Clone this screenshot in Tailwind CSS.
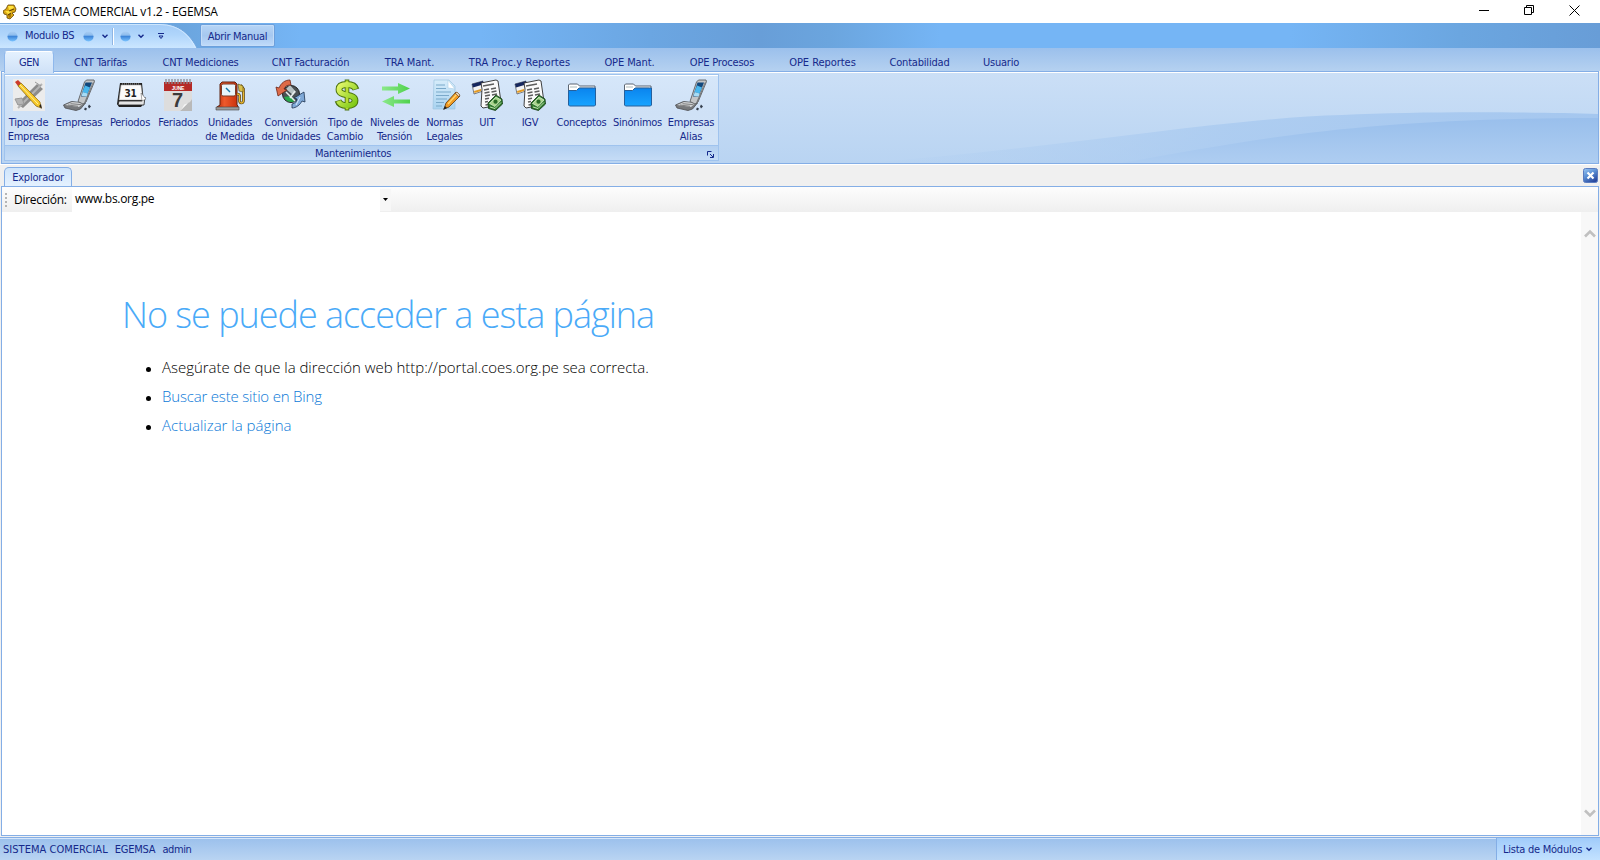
<!DOCTYPE html>
<html lang="es">
<head>
<meta charset="utf-8">
<title>SISTEMA COMERCIAL v1.2 - EGEMSA</title>
<script src="https://cdn.jsdelivr.net/npm/@tailwindcss/browser@4"></script>
</head>
<body class="w-[1600px] h-[860px] overflow-hidden bg-[#f0f0f0] font-['DejaVu_Sans_Condensed','DejaVu_Sans',sans-serif] [font-stretch:condensed] text-[11px] leading-[14px] text-[#15298b] flex flex-col">

<!-- shared icons -->
<svg class="absolute w-0 h-0">
  <defs>
    <linearGradient id="gGas" x2="1"><stop stop-color="#b82a08"/><stop offset=".35" stop-color="#ee5a2b"/><stop offset="1" stop-color="#c92f0b"/></linearGradient>
    <linearGradient id="gDol" x2="1" y2="1"><stop stop-color="#e4f76a"/><stop offset="1" stop-color="#7cc814"/></linearGradient>
    <linearGradient id="gFol" x2="0" y2="1"><stop stop-color="#0a84ee"/><stop offset="1" stop-color="#18a4ff"/></linearGradient>
    <linearGradient id="gArr" x2="1"><stop stop-color="#8be88a"/><stop offset="1" stop-color="#4fd24c"/></linearGradient>
    <linearGradient id="gDoc" x2="0" y2="1"><stop stop-color="#d6ecfa"/><stop offset="1" stop-color="#a9d3f0"/></linearGradient>
    <linearGradient id="gOrb" x2="0" y2="1"><stop stop-color="#a9cdf3"/><stop offset=".35" stop-color="#8fbdee"/><stop offset=".5" stop-color="#3f87da"/><stop offset="1" stop-color="#7cc4ff"/></linearGradient>
    <symbol id="phone" viewBox="0 0 32 32">
      <path d="M0.500 26l8-3.500 14 1.500-5 6-4.500 1.500-11-2.500z" fill="#77797c" stroke="#4c4e50" stroke-width=".8"/>
      <path d="M2 26l7-3 12 1-5 4z" fill="#cfd1d3"/>
      <path d="M5 26l10 1.300M7.500 24.700l11 1" stroke="#777" stroke-width=".9"/>
      <path d="M15 22.500L21.500 3l2-2h7.500l.5 1.500-8.500 20.500-3 2z" fill="#c3c5c7" stroke="#5b5d60" stroke-width=".9"/>
      <path d="M18 17.500L22.500 3.500h6.500l-5.500 14z" fill="#12487c"/>
      <path d="M19.500 13l2.500-6.500 5 2-2.500 6z" fill="#49b8ee"/><path d="M18.500 17l1.200-4 5 1.500-1 3z" fill="#a7dcf5"/>
      <path d="M29.500 4l1.500-2-8 21-2 1z" fill="#75787b"/>
      <path d="M26 25.500l2 2-2 2-1-2zM22 28.500l2 1-1 2-2-1z" fill="#333c4a"/>
    </symbol>
    <symbol id="folder" viewBox="0 0 32 32">
      <path d="M2.500 16V6l1-1h8l2 2h15.500V16z" fill="#fff" stroke="#5b6572"/>
      <path d="M4 8h7M14 9h13" stroke="#9aa" stroke-width=".8"/>
      <path d="M2.500 11.500h8l2.500-2.500h16.500V26l-1 1h-25l-1-1z" fill="url(#gFol)" stroke="#26609c"/>
    </symbol>
    <symbol id="invoice" viewBox="0 0 32 32">
      <path d="M1 5l11-3v10l-9 3z" fill="#f3f3f3" stroke="#333" stroke-width=".6"/><path d="M1 5l11-3v3.500l-10 3z" fill="#15275f"/><path d="M3 12l7-2v2l-6.500 2z" fill="#e49a22"/>
      <path d="M10 4l15-3 2 1 3 21-2 3-16 3-2-2 1-17z" fill="#fafafa" stroke="#2c2c2c" stroke-width=".9"/>
      <path d="M12 7l11-2M13 11l5-1M20 10l5-1M13.500 14l5-1M20.500 13l5-1M14 17l5-1M21 16l5-1M14 20l4-.8M14 23l3-.6M14.500 26l3-.6" stroke="#5d5d5d" stroke-width="1.500"/>
      <path d="M17 24l8-8 6 4 .5 5-7 6.500-7-2z" fill="#2f7a2d" stroke="#12380f" stroke-width=".8"/>
      <path d="M18.500 24.500l6.500-6.500 5 3-6 6.500z" fill="#a9d58c" stroke="#e3f3d5" stroke-width=".7"/><path d="M19 28l5 1.500 6-6" fill="none" stroke="#cfe9bd" stroke-width=".9"/><circle cx="24.500" cy="22.700" r="2.100" fill="#2a6c28"/>
    </symbol>
    <symbol id="orb" viewBox="0 0 12 12"><circle cx="6" cy="6" r="5.500" fill="url(#gOrb)"/></symbol>
    <symbol id="chev" viewBox="0 0 6 5"><path d="M.5 .7L3 3.200 5.500 .7" fill="none" stroke="#15298b" stroke-width="1.400"/></symbol>
  </defs>
</svg>

<!-- title bar -->
<header class="h-[23px] shrink-0 bg-white flex items-center text-black font-['Open_Sans',sans-serif] [font-stretch:normal] text-[12px]">
  <svg class="w-[14px] h-[16px] ml-[3px]" viewBox="0 0 14 16"><path d="M5 1l6 0 2 4-1 3-3 1 2 2-4 4-3-1 0-3-3-1-1-3 3-2z" fill="#d9a514" stroke="#6b4a05" stroke-width=".8"/><path d="M5 2l5 0 1 2-5 2zM2 7l4 0 3 1-4 2z" fill="#ffe23c"/><path d="M5 10l3 0 0 3-2 1z" fill="#a87708"/><path d="M6 7l5-2M5 11l3-2" stroke="#4d3503" stroke-width=".9"/></svg>
  <span class="ml-[6px] tracking-[-0.2px]">SISTEMA COMERCIAL v1.2 - EGEMSA</span>
  <div class="ml-auto mr-[20px] flex items-center gap-[35px] mb-[3px]">
    <svg class="w-[10px] h-[10px]" viewBox="0 0 10 10"><path d="M0 5.500h10" stroke="#000"/></svg>
    <svg class="w-[10px] h-[10px]" viewBox="0 0 10 10"><path d="M.5 2.500h7v7h-7zM2.500 2V.5h7v7H8" fill="none" stroke="#000"/></svg>
    <svg class="w-[11px] h-[11px]" viewBox="0 0 11 11"><path d="M.5 .5l10 10M10.500 .5l-10 10" stroke="#000"/></svg>
  </div>
</header>

<!-- quick access bar -->
<div class="h-[25px] shrink-0 flex bg-[linear-gradient(90deg,#689dd7_0px,#6ba5de_180px,#75b5f5_300px,#75b5f5_480px,#6ba6e2_650px,#689ed8_760px,#6ba5de_830px,#75b5f5_940px,#75b5f5_1290px,#6ba6e0_1460px,#689dd7_1600px)]">
  <div class="relative w-[198px] h-full">
    <svg class="absolute inset-0 w-[198px] h-[25px]" viewBox="0 0 198 25"><linearGradient id="gQ" x2="0" y2="1"><stop stop-color="#a3cbf6"/><stop offset=".45" stop-color="#afd5fb"/><stop offset="1" stop-color="#cbe6ff"/></linearGradient><path d="M0 .5H160C180 .5 191 13 197 25H0z" fill="url(#gQ)"/><path d="M0 .5H160C180 .5 191 13 197 25" fill="none" stroke="#6fa5de"/><path d="M0 1.500H160C179 1.500 190 13 195.500 25" fill="none" stroke="#d8ecff" stroke-width=".8"/></svg>
    <div class="relative h-full pt-px flex items-center">
      <svg class="w-[11px] h-[11px] ml-[7px]"><use href="#orb"/></svg>
      <span class="ml-[7px] w-[50px] whitespace-nowrap tracking-[-0.3px]">Modulo BS</span>
      <svg class="w-[11px] h-[11px] ml-[8px]"><use href="#orb"/></svg>
      <svg class="w-[6px] h-[5px] ml-[8px]"><use href="#chev"/></svg>
      <div class="w-[2px] h-[17px] bg-[#8fb5e3] ml-[4px] border-r border-white"></div>
      <svg class="w-[11px] h-[11px] ml-[6px]"><use href="#orb"/></svg>
      <svg class="w-[6px] h-[5px] ml-[7px]"><use href="#chev"/></svg>
      <svg class="w-[6px] h-[7px] ml-[14px]" viewBox="0 0 6 7"><path d="M0 .5h6M1 3h4L3 5.500z" stroke="#15298b" stroke-width="1" fill="none"/></svg>
    </div>
  </div>
  <button class="ml-[2px] mt-px w-[75px] h-[23px] rounded-[2px] border border-[#6c9fdc] bg-linear-to-b from-[#b7d5f6] via-[#a6c8f0] to-[#c0dbfa] shadow-[inset_0_0_0_1px_#c4ddf8] whitespace-nowrap tracking-[-0.3px] pt-[2px]">Abrir Manual</button>
</div>

<!-- ribbon tabs -->
<nav class="h-[23px] shrink-0 flex bg-linear-to-b from-[#9bc0ec] to-[#b5d1f0] pl-[4px] whitespace-nowrap text-center tracking-[-0.2px] leading-[30px]">
  <div class="w-[50px] h-[22px] mt-[3px] rounded-t-[4px] border border-b-0 border-[#8fb8ec] border-t-white bg-linear-to-b from-[#e4f1fe] to-[#cfe1f7] leading-[22px] z-10 tracking-[-0.4px]">GEN</div>
  <div class="w-[93px]">CNT Tarifas</div>
  <div class="w-[107px]">CNT Mediciones</div>
  <div class="w-[113px]">CNT Facturación</div>
  <div class="w-[85px] tracking-[-0.1px]">TRA Mant.</div>
  <div class="w-[135px] tracking-[0.1px]">TRA Proc.y Reportes</div>
  <div class="w-[85px] tracking-[-0.1px]">OPE Mant.</div>
  <div class="w-[100px]">OPE Procesos</div>
  <div class="w-[101px] tracking-[-0.05px]">OPE Reportes</div>
  <div class="w-[93px]">Contabilidad</div>
  <div class="w-[70px]">Usuario</div>
</nav>

<!-- ribbon body -->
<section class="relative h-[93px] shrink-0 mx-px border border-[#84aee6] bg-linear-to-b from-[#cbdff6] to-[#b9d4f2] shadow-[inset_0_1px_0_#fff]">
  <svg class="absolute right-0 bottom-0 w-[896px] h-[89px]" viewBox="0 0 896 89" preserveAspectRatio="none">
    <defs>
      <linearGradient id="w1" x1="0" x2="1"><stop stop-color="#a9caf0" stop-opacity="0"/><stop offset=".5" stop-color="#a9caf0" stop-opacity=".8"/><stop offset="1" stop-color="#a5c7ef"/></linearGradient>
      <linearGradient id="w2" x2="0" y2="1"><stop stop-color="#99bfec"/><stop offset="1" stop-color="#aecdf1"/></linearGradient>
    </defs>
    <path d="M160 89C330 78 520 44 640 41C720 37 830 38 896 40V89z" fill="url(#w1)"/>
    <path d="M420 89C560 64 660 44 896 44V89z" fill="url(#w2)"/>
  </svg>
  <div class="relative mt-[2px] ml-[2px] w-[715px] h-[87px] border border-[#9fc3ee] bg-linear-to-b from-[#d6e7fa] from-0% via-[#cfe1f6] via-45% to-[#d3e5f8] shadow-[inset_0_1px_0_#fff] flex flex-col">
    <div class="flex h-[70px] pt-[4px] text-center tracking-[-0.24px] whitespace-nowrap [&>div]:flex [&>div]:flex-col [&>div]:items-center [&_svg]:w-[32px] [&_svg]:h-[32px] [&_svg]:shrink-0 [&_svg]:mb-[5px]">
      <div class="w-[47px]"><svg viewBox="0 0 32 32"><path d="M0 0h32v32H0z" fill="#ececec"/><path d="M4 25L24 5l6 5L10 29z" fill="#8c8c8c"/><path d="M6 5l20 22" stroke="#8a8a8a" stroke-width="4"/><path d="M5 29l24-24" stroke="#b5b5b5" stroke-width="2"/><path d="M2 20l7-1 2 6-6 1zM22 3l6 4" stroke="#999" fill="#b5b5b5"/><path d="M2 3l3-2 3 3-3 3z" fill="#cc3b2b"/><path d="M5 7l3-3 19 19 1 6-5-2z" fill="#f7c92a" stroke="#8a6410" stroke-width=".7"/><path d="M7 6l18 19" stroke="#fff09a"/><path d="M26 27l3 3-1-5z" fill="#2a2114"/></svg>Tipos de<br>Empresa</div>
      <div class="w-[54px]"><svg><use href="#phone"/></svg>Empresas</div>
      <div class="w-[48px]"><svg class="ml-[2px]" viewBox="0 0 32 32"><path d="M5 4h22l2 20-3 4H4l-2-3z" fill="#222"/><path d="M6 6h20l2 15H4z" fill="#fbfbfb" stroke="#999" stroke-width=".5"/><path d="M4 22h23l3-4-1 8H3z" fill="#e5e5e5" stroke="#222" stroke-width=".8"/><path d="M26 14l5 6-4 2z" fill="#fff" stroke="#555" stroke-width=".5"/><path d="M7 5h18" stroke="#777" stroke-width="1.500" stroke-dasharray="1 1"/><text x="15.500" y="18" text-anchor="middle" font-family="DejaVu Sans" font-weight="bold" font-size="10" letter-spacing="-.3" fill="#222">31</text></svg>Periodos</div>
      <div class="w-[48px]"><svg viewBox="0 0 32 32"><path d="M2 4h28v28H2z" fill="#ddd"/><path d="M2 3h28v9H2z" fill="#b52a27"/><path d="M4 0v5M7 0v5M10 0v5M13 0v5M16 0v5M19 0v5M22 0v5M25 0v5M28 0v5" stroke="#8b8b91" stroke-width="1.300"/><path d="M18 32l12-12v12z" fill="#b9b9b9"/><path d="M18 32c4-4 3-7 6-7 3-1 5-3 6-5z" fill="#f6f6f6"/><text x="16" y="10.500" text-anchor="middle" font-family="Liberation Sans" font-weight="bold" font-size="5" fill="#fff">JUNE</text><text x="15.500" y="28" text-anchor="middle" font-family="Liberation Sans" font-weight="bold" font-size="20" fill="#3b3b3b">7</text></svg>Feriados</div>
      <div class="w-[56px]"><svg viewBox="0 0 32 32"><path d="M3 30h21v-3l-1-1V5l-2-2H8L6 5v21l-3 2z" fill="url(#gGas)" stroke="#5c2412"/><path d="M2 28h23v3H2z" fill="#9b9b9b" stroke="#444" stroke-width=".6"/><rect x="7.500" y="5" width="14" height="12" rx="1.500" fill="#e8f5fb" stroke="#7a3b26"/><path d="M12 9l4 4" stroke="#1476a8" stroke-width="1.500"/><path d="M23 15c3 0 3 2 2.500 6s4 4 4 0V10l-3-4" fill="none" stroke="#50390a" stroke-width="2.600"/><path d="M23 15c3 0 3 2 2.500 6s4 4 4 0V10l-3-4" fill="none" stroke="#e8b932" stroke-width="1.300"/><path d="M24 5l5 2v6l-4-1z" fill="#d9c04a" stroke="#54430f" stroke-width=".6"/></svg>Unidades<br>de Medida</div>
      <div class="w-[66px]"><svg viewBox="0 0 32 32"><circle cx="16" cy="15" r="8.500" fill="#4b5155" stroke="#222"/><path d="M11 10l4-4 6 7-3 3z" fill="#b8c2c4"/><path d="M9 18c2 5 7 6 11 4l-4-5z" fill="#27a84a"/><path d="M11 13l9 9M20 12l-5 7" stroke="#e8eeee" stroke-width="1.500"/><path d="M3 17L1 8l3 1c2-5 6-8 11-8l1 5c-4 0-6 1-7 4l3 1z" fill="#dd6a48" stroke="#6f2415" stroke-width=".8"/><path d="M29 13l1 10-3-1c-2 4-6 7-10 7l0-4c3-1 5-2 5-5l-3-1z" fill="#7fa9d8" stroke="#1e3350" stroke-width=".8"/><path d="M25 18l-4 8" stroke="#d8eafc"/></svg>Conversión<br>de Unidades</div>
      <div class="w-[42px]"><svg class="ml-[3px]" viewBox="0 0 32 32"><path d="M16 0.500v31" fill="none" stroke="#4c7411" stroke-width="4.600"/><path d="M25 10.500c-1-3.500-4-5-9-5S8 7 8 10.500s3 4.500 8 5.500 8 2 8 5.500-3 5-8 5-8-1.500-9-5" fill="none" stroke="#4c7411" stroke-width="6.800"/><path d="M16 1.500v29" stroke="#b9dc30" stroke-width="2.800"/><path d="M24.500 10c-1-3-3.500-4.500-8.500-4.500S8 7 8 10.500s3 4.500 8 5.500 8 2 8 5.500-3 5-8 5-7.500-1.500-8.500-4.500" fill="none" stroke="url(#gDol)" stroke-width="4.800"/></svg>Tipo de<br>Cambio</div>
      <div class="w-[57px]"><svg class="ml-[2px]" viewBox="0 0 32 32"><path d="M2 7.500h16V4l12 5.500L18 15v-3.500H2zM30 20.500H14V17L2 22.500 14 28v-3.500h16z" fill="url(#gArr)"/></svg>Niveles de<br>Tensión</div>
      <div class="w-[43px]"><svg class="ml-[2px]" viewBox="0 0 32 32"><path d="M4 1h15l6 6v23H3z" fill="url(#gDoc)" stroke="#9dc4df" stroke-width=".7"/><path d="M18 1v8l7 1z" fill="#fff" stroke="#a9cde6" stroke-width=".6"/><path d="M6 6h9M6 9.500h10M6 13h15M6 16.500h13M6 20h11M6 23.500h8M6 27h6" stroke="#7aa9ca" stroke-width="1.200"/><path d="M14 30l2-6L26 13l4 4-11 11z" fill="#f09a22" stroke="#5f380d" stroke-width=".8"/><path d="M18 25l9-10" stroke="#ffd66e" stroke-width="1.300"/><path d="M25 14l2-1 3 3-1 2z" fill="#e9cfae" stroke="#5f380d" stroke-width=".6"/><path d="M13 31l2-4 2 2z" fill="#222"/></svg>Normas<br>Legales</div>
      <div class="w-[42px]"><svg><use href="#invoice"/></svg>UIT</div>
      <div class="w-[44px]"><svg><use href="#invoice"/></svg>IGV</div>
      <div class="w-[59px]"><svg><use href="#folder"/></svg>Conceptos</div>
      <div class="w-[53px]"><svg><use href="#folder"/></svg>Sinónimos</div>
      <div class="w-[54px]"><svg><use href="#phone"/></svg>Empresas<br>Alias</div>
    </div>
    <div class="relative h-[15px] border-t border-[#9fc3ee] bg-linear-to-b from-[#b3d0f1] to-[#c5dcf6] text-center leading-[15px] tracking-[-0.25px] pr-[17px]">Mantenimientos
      <svg class="absolute right-[4px] top-[5px] w-[7px] h-[7px]" viewBox="0 0 7 7"><path d="M.5 4.500V.5h4M3 3l3 3M6.500 3v3.500H3" stroke="#15298b" fill="none"/></svg>
    </div>
  </div>
</section>

<!-- document tabs -->
<div class="h-[22px] shrink-0 flex justify-between pl-[4px] pr-[2px] border-t border-white">
  <div class="w-[68px] mt-[2px] h-[20px] rounded-t-[5px] border border-b-0 border-[#84aee6] bg-linear-to-b from-[#cfe5fb] to-[#e6f2ff] text-center leading-[20px] tracking-[-0.2px]">Explorador</div>
  <svg class="w-[15px] h-[15px] mt-[3px]" viewBox="0 0 15 15"><linearGradient id="gX" x2=".6" y2="1"><stop stop-color="#9cc9f5"/><stop offset=".5" stop-color="#5a8fd4"/><stop offset="1" stop-color="#2b4aa0"/></linearGradient><rect x=".5" y=".5" width="14" height="14" rx="2" fill="url(#gX)" stroke="#5a7cc0"/><path d="M4.500 4.500l6 6M10.500 4.500l-6 6" stroke="#fff" stroke-width="2.200"/></svg>
</div>

<!-- browser pane -->
<main class="flex-1 mx-px border border-[#84aee6] bg-white flex flex-col text-black [font-stretch:normal]">
  <div class="h-[25px] shrink-0 flex items-center bg-linear-to-b from-[#fdfdfd] to-[#efefef] font-['Open_Sans',sans-serif] text-[12px]">
    <svg class="w-[2px] h-[14px] ml-[3px]" viewBox="0 0 2 14"><path d="M1 0v14" stroke="#b5b5b5" stroke-width="2" stroke-dasharray="2 2"/></svg>
    <span class="ml-[7px] w-[58px] tracking-[-0.3px]">Dirección:</span>
    <div class="w-[308px] h-full bg-white pl-[3px] leading-[24px] tracking-[-0.3px]">www.bs.org.pe</div>
    <div class="w-[11px] h-[22px] bg-[#f7f7f7] flex items-center justify-center"><svg class="w-[5px] h-[3px]" viewBox="0 0 5 3"><path d="M0 0h5L2.500 3z"/></svg></div>
  </div>
  <div class="flex-1 flex justify-between">
    <article class="pl-[120px] pt-[76px] font-['Open_Sans',sans-serif] font-light">
      <h1 class="text-[36px] leading-[54px] text-[#4aaaf8] tracking-[-1.03px] whitespace-nowrap">No se puede acceder a esta página</h1>
      <ul class="mt-[11px] ml-[24px] text-[15px] leading-[29px] text-[#0a78d7] whitespace-nowrap [&>li]:flex [&>li]:items-center [&>li]:gap-[11px] [&>li]:before:content-[''] [&>li]:before:w-[5px] [&>li]:before:h-[5px] [&>li]:before:mt-[3px] [&>li]:before:rounded-full [&>li]:before:bg-black">
        <li class="tracking-[-0.03px] text-black">Asegúrate de que la dirección web http://portal.coes.org.pe sea correcta.</li>
        <li class="tracking-[-0.18px]">Buscar este sitio en Bing</li>
        <li class="tracking-[0px]">Actualizar la página</li>
      </ul>
    </article>
    <div class="w-[17px] bg-[#f8f8f8] flex flex-col justify-between items-center pt-[17px] pb-[17px]">
      <svg class="w-[12px] h-[9px]" viewBox="0 0 12 9"><path d="M1 7.500l5-5 5 5" fill="none" stroke="#c0c0c0" stroke-width="2.600"/></svg>
      <svg class="w-[12px] h-[9px]" viewBox="0 0 12 9"><path d="M1 1.500l5 5 5-5" fill="none" stroke="#c0c0c0" stroke-width="2.600"/></svg>
    </div>
  </div>
</main>

<!-- status bar -->
<footer class="mt-px h-[23px] shrink-0 border-t border-[#84aee6] bg-linear-to-b from-[#9bc0ec] to-[#b9d4f2] shadow-[inset_0_1px_0_#d5e6fa] flex items-center justify-between pl-[3px] whitespace-nowrap">
  <div class="flex gap-[7px] pt-px"><span class="tracking-[0.03px]">SISTEMA COMERCIAL</span><span class="tracking-[-0.2px]">EGEMSA</span><span class="tracking-[-0.4px]">admin</span></div>
  <div class="w-[104px] h-full flex items-center border-l border-[#84aee6] bg-linear-to-b from-[#a0cbfa] to-[#c3e2ff] pl-[6px] pt-px gap-[3px] tracking-[-0.25px]"><span class="w-[80px]">Lista de Módulos</span><svg class="w-[6px] h-[5px]"><use href="#chev"/></svg></div>
</footer>
</body>
</html>
